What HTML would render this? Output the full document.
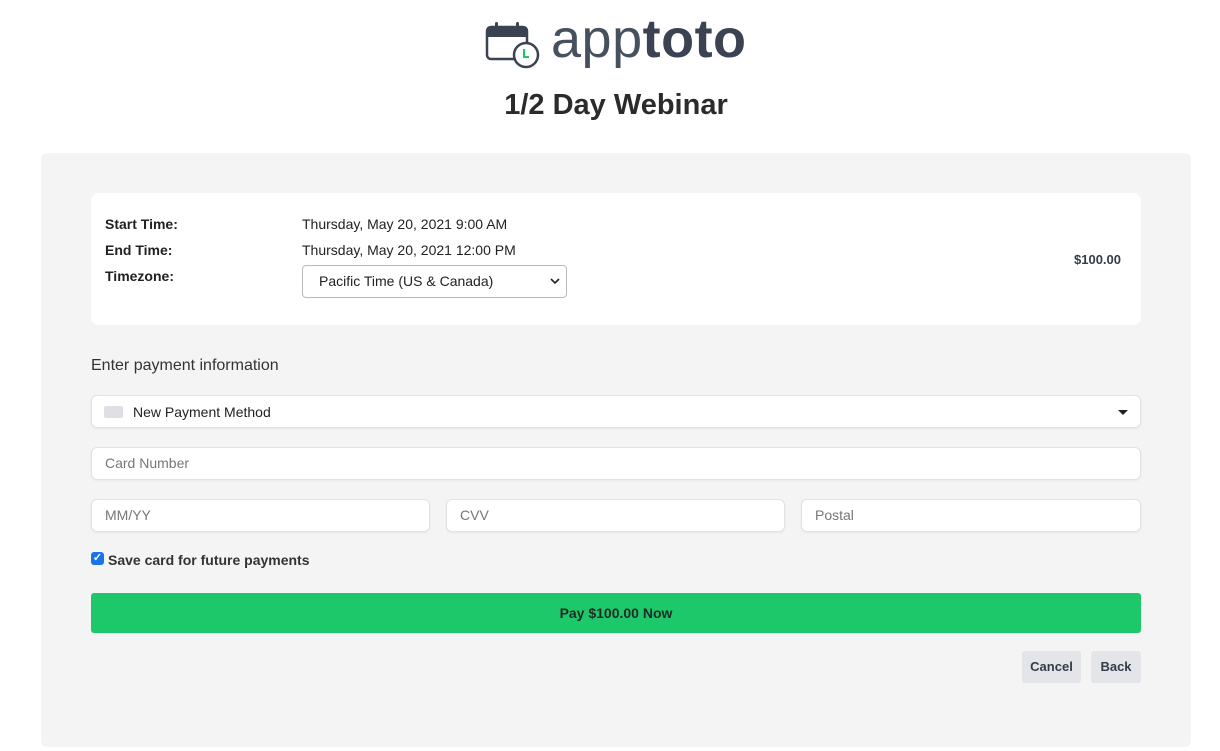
<!DOCTYPE html>
<html><head><style>
*{box-sizing:border-box;margin:0;padding:0}
body{width:1220px;height:751px;background:#fff;font-family:"Liberation Sans",sans-serif;color:#222;position:relative;overflow:hidden}
.abs{position:absolute}
.panel{left:41px;top:153px;width:1150px;height:594px;background:#f4f4f5;border-radius:6px}
.card{left:91px;top:193px;width:1050px;height:132px;background:#fff;border-radius:8px}
.lbl{font-size:14px;font-weight:bold;color:#222}
.val{font-size:14px;color:#222}
.inp{background:#fff;border:1px solid #e2e2e4;border-radius:6px;height:33px;font-size:14px;color:#777;padding-left:13px;line-height:31px;box-shadow:0 1px 2px rgba(0,0,0,.05)}
.btn{background:#e3e5e8;border-radius:3px;font-size:13px;font-weight:bold;color:#333c48;text-align:center;line-height:32px;height:32px}
</style></head><body>
<svg class="abs" style="left:485px;top:21px" width="56" height="48" viewBox="0 0 56 48">
<rect x="2" y="6" width="40" height="32" rx="4" fill="none" stroke="#3b4352" stroke-width="2.5"/>
<path d="M2 10a4 4 0 0 1 4-4h32a4 4 0 0 1 4 4v6H2z" fill="#3b4352"/>
<rect x="10" y="1" width="3" height="8" rx="1.5" fill="#3b4352"/>
<rect x="31" y="1" width="3" height="8" rx="1.5" fill="#3b4352"/>
<circle cx="41" cy="34" r="12" fill="#fff" stroke="#3b4352" stroke-width="2.5"/>
<path d="M39 28v8h5" fill="none" stroke="#1cc86a" stroke-width="2"/>
</svg>
<div class="abs" style="left:551px;top:8px;font-size:54px;color:#3b4352;letter-spacing:0.5px"><span style="font-weight:normal;color:#46505e">app</span><span style="font-weight:bold">toto</span></div>
<div class="abs" style="left:0;width:1232px;text-align:center;top:89px;font-size:29px;font-weight:bold;color:#2b2b2b">1/2 Day Webinar</div>
<div class="abs panel"></div>
<div class="abs card"></div>
<div class="abs lbl" style="left:105px;top:216px">Start Time:</div>
<div class="abs lbl" style="left:105px;top:242px">End Time:</div>
<div class="abs lbl" style="left:105px;top:268px">Timezone:</div>
<div class="abs val" style="left:302px;top:216px">Thursday, May 20, 2021 9:00 AM</div>
<div class="abs val" style="left:302px;top:242px">Thursday, May 20, 2021 12:00 PM</div>
<div class="abs" style="left:302px;top:265px;width:265px;height:33px;border:1px solid #bbb;border-radius:4px;font-size:14px;line-height:31px;padding-left:16px;color:#222">Pacific Time (US &amp; Canada)
<svg style="position:absolute;right:6px;top:12px" width="10" height="7" viewBox="0 0 10 7"><path d="M1 1l4 4 4-4" fill="none" stroke="#222" stroke-width="1.6"/></svg></div>
<div class="abs lbl" style="left:1074px;top:252px;font-size:13px;color:#333c48">$100.00</div>
<div class="abs" style="left:91px;top:357px;font-size:16px;color:#333">Enter payment information</div>
<div class="abs inp" style="left:91px;top:395px;width:1050px;color:#222">&nbsp;</div>
<div class="abs" style="left:104px;top:406px;width:19px;height:12px;background:#dfe0e3;border-radius:2px"></div>
<div class="abs" style="left:133px;top:404px;font-size:14px;color:#222">New Payment Method</div>
<div class="abs" style="left:1118px;top:410px;border-left:5px solid transparent;border-right:5px solid transparent;border-top:5px solid #222"></div>
<div class="abs inp" style="left:91px;top:447px;width:1050px">Card Number</div>
<div class="abs inp" style="left:91px;top:499px;width:339px">MM/YY</div>
<div class="abs inp" style="left:446px;top:499px;width:339px">CVV</div>
<div class="abs inp" style="left:801px;top:499px;width:340px">Postal</div>
<div class="abs" style="left:91px;top:552px;width:13px;height:13px;background:#1a73e8;border-radius:3px;color:#fff;font-size:11px;line-height:13px;text-align:center;font-weight:bold">✓</div>
<div class="abs" style="left:108px;top:552px;font-size:14px;font-weight:bold;color:#333">Save card for future payments</div>
<div class="abs" style="left:91px;top:593px;width:1050px;height:40px;background:#1cc86a;border-radius:3px;text-align:center;line-height:40px;font-size:14px;font-weight:bold;color:#1e2a25">Pay $100.00 Now</div>
<div class="abs btn" style="left:1022px;top:651px;width:59px">Cancel</div>
<div class="abs btn" style="left:1091px;top:651px;width:50px">Back</div>
</body></html>
